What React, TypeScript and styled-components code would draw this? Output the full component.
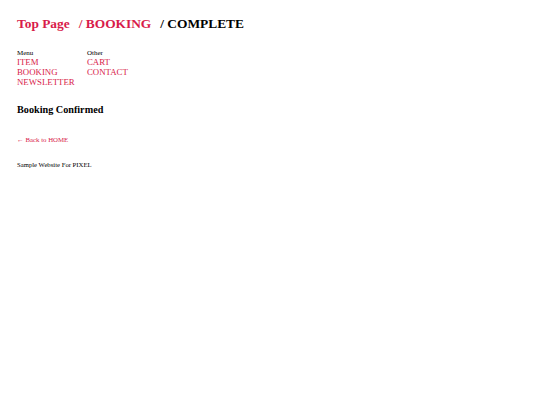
import styled, { createGlobalStyle } from 'styled-components'

const GlobalStyle = createGlobalStyle`
  html, body {
    margin: 0;
    padding: 0;
    background: #ffffff;
  }

  body {
    font-family: 'Liberation Serif', 'Times New Roman', serif;
    color: #000000;
  }
`

const ACCENT = '#d81b4a'

const Page = styled.div`
  display: flex;
  flex-direction: column;
  padding: 15px 17px;
`

const Breadcrumb = styled.h1`
  display: flex;
  align-items: baseline;
  gap: 9px;
  margin: 0;
  font-size: 13.4px;
  line-height: 18px;
  font-weight: bold;
`

const Crumb = styled.a<{ $current?: boolean }>`
  color: ${({ $current }) => ($current ? '#000000' : ACCENT)};
  text-decoration: none;
`

const Nav = styled.nav`
  display: flex;
  margin-top: 16.5px;
`

const NavColumn = styled.div`
  display: flex;
  flex-direction: column;
  width: 70px;
`

const NavLabel = styled.span`
  font-size: 7px;
  line-height: 7.5px;
`

const NavLink = styled.a`
  color: ${ACCENT};
  font-size: 8.8px;
  line-height: 10px;
  text-decoration: none;
`

const Heading = styled.h2`
  margin: 16px 0 0;
  font-size: 10.2px;
  line-height: 14px;
  font-weight: bold;
`

const BackLink = styled.a`
  margin-top: 18px;
  color: ${ACCENT};
  font-size: 6.8px;
  line-height: 9px;
  text-decoration: none;
`

const Footer = styled.footer`
  margin-top: 16px;
  font-size: 6.7px;
  line-height: 9px;
`

const MENU = ['ITEM', 'BOOKING', 'NEWSLETTER']
const OTHER = ['CART', 'CONTACT']

export default function App() {
  return (
    <>
      <GlobalStyle />
      <Page>
        <Breadcrumb>
          <Crumb href="#">Top Page</Crumb>
          <Crumb href="#">/ BOOKING</Crumb>
          <Crumb $current>/ COMPLETE</Crumb>
        </Breadcrumb>

        <Nav>
          <NavColumn>
            <NavLabel>Menu</NavLabel>
            {MENU.map((item) => (
              <NavLink key={item} href="#">
                {item}
              </NavLink>
            ))}
          </NavColumn>
          <NavColumn>
            <NavLabel>Other</NavLabel>
            {OTHER.map((item) => (
              <NavLink key={item} href="#">
                {item}
              </NavLink>
            ))}
          </NavColumn>
        </Nav>

        <Heading>Booking Confirmed</Heading>

        <BackLink href="#">← Back to HOME</BackLink>

        <Footer>Sample Website For PIXEL</Footer>
      </Page>
    </>
  )
}
